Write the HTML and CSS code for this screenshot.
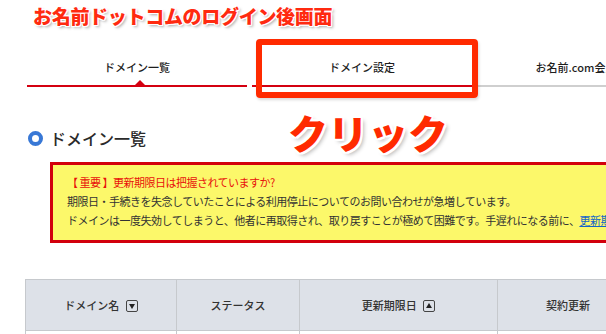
FILE: index.html
```html
<!DOCTYPE html>
<html lang="ja">
<head>
<meta charset="utf-8">
<title>お名前ドットコムのログイン後画面</title>
<link rel="stylesheet" href="styles.css">
</head>
<body>
<h1 class="page-title">お名前ドットコムのログイン後画面</h1>
<nav class="tabs">
  <div class="tab tab-active">ドメイン一覧</div>
  <div class="tab tab-red">ドメイン設定</div>
  <div class="tab tab-gray">お名前.com会員情報</div>
</nav>
<h2 class="section-head"><span class="ring"></span>ドメイン一覧</h2>
<div class="notice">
  <p class="notice-title">【&nbsp;重要&nbsp;】更新期限日は把握されていますか?</p>
  <p>期限日・手続きを失念していたことによる利用停止についてのお問い合わせが急増しています。</p>
  <p>ドメインは一度失効してしまうと、他者に再取得され、取り戻すことが極めて困難です。手遅れになる前に、<a href="#" class="notice-link">更新期限日を確認</a></p>
</div>
<table class="domains">
  <thead>
    <tr>
      <th class="c1">ドメイン名 <span class="sort sort-down"></span></th>
      <th class="c2">ステータス</th>
      <th class="c3">更新期限日 <span class="sort sort-up"></span></th>
      <th class="c4">契約更新</th>
      <th class="c5">自動更新</th>
    </tr>
  </thead>
  <tbody>
    <tr><td></td><td></td><td></td><td></td><td></td></tr>
  </tbody>
</table>
<div class="highlight-box"></div>
<div class="click-label">クリック</div>
</body>
</html>
```
FILE: styles.css
```css
html, body {
  margin: 0;
  padding: 0;
}
body {
  width: 606px;
  height: 334px;
  overflow: hidden;
  position: relative;
  background: #fff;
  font-family: "Noto Sans CJK JP", "Noto Sans", sans-serif;
  color: #222;
}
.page-title {
  margin: 0;
  padding: 5px 0 0 33px;
  height: 35px;
  box-sizing: border-box;
  font-size: 19px;
  line-height: 22px;
  font-weight: 900;
  letter-spacing: -0.3px;
  color: #ff2a10;
  text-shadow:
    1px 0 0 #fff, -1px 0 0 #fff, 0 1px 0 #fff, 0 -1px 0 #fff,
    1px 1px 0 #fff, -1px -1px 0 #fff, 1px -1px 0 #fff, -1px 1px 0 #fff,
    2px 2px 3px rgba(0,0,0,0.35);
}
.tabs {
  display: flex;
  gap: 5px;
  margin: 5px 0 0 27px;
}
.tab {
  flex: none;
  width: 220px;
  height: 47px;
  box-sizing: border-box;
  padding-top: 9px;
  display: flex;
  align-items: center;
  justify-content: center;
  font-size: 11px;
  font-weight: 500;
  color: #1e1e1e;
  border-bottom: 2px solid #d40010;
  position: relative;
  white-space: nowrap;
}
.tab-gray {
  border-bottom-color: #cfcfcf;
}
.tab-active::after {
  content: "";
  position: absolute;
  left: 50%;
  bottom: 0;
  margin-left: -2px;
  border-left: 5px solid transparent;
  border-right: 5px solid transparent;
  border-bottom: 5px solid #d40010;
}
.section-head {
  margin: 41px 0 0 28px;
  display: flex;
  align-items: center;
  gap: 7px;
  font-size: 16px;
  line-height: 20px;
  font-weight: 500;
  color: #2a2a2a;
}
.ring {
  width: 15px;
  height: 15px;
  box-sizing: border-box;
  border: 4px solid #3878d6;
  border-radius: 50%;
}
.notice {
  margin: 14px 0 0 50px;
  width: 640px;
  box-sizing: border-box;
  border: 3px solid #d2000c;
  background: #fcf86a;
  padding: 8px 0 10px 14px;
  font-size: 11px;
  line-height: 19px;
  letter-spacing: -0.5px;
  color: #333;
  white-space: nowrap;
  text-spacing-trim: space-all;
}
.notice p {
  margin: 0;
}
.notice-title {
  color: #e8100a;
}
.notice-link {
  color: #1565c8;
  text-decoration: underline;
}
.domains {
  margin: 36px 0 0 25px;
  border-collapse: collapse;
  table-layout: fixed;
  width: 760px;
  font-size: 11px;
  color: #333;
}
.domains th, .domains td {
  border: 1px solid #c6c9cd;
}
.domains th {
  background: #dde1e8;
  height: 50px;
  font-weight: 500;
  text-align: center;
  padding: 0;
  white-space: nowrap;
}
.domains td {
  height: 40px;
}
.c1 { width: 150px; }
.c2 { width: 122px; }
.c3 { width: 197px; }
.c4 { width: 140px; }
.c5 { width: 151px; }
.sort {
  display: inline-block;
  vertical-align: middle;
  width: 12px;
  height: 12px;
  box-sizing: border-box;
  border: 1px solid #444;
  border-radius: 2px;
  margin-left: 4px;
  position: relative;
  top: -1px;
}
.sort::after {
  content: "";
  position: absolute;
  left: 2px;
  top: 3px;
  border-left: 3px solid transparent;
  border-right: 3px solid transparent;
}
.sort-down::after {
  border-top: 5px solid #222;
}
.sort-up::after {
  top: 2px;
  border-bottom: 5px solid #222;
}
.highlight-box {
  position: absolute;
  left: 256px;
  top: 39px;
  width: 222px;
  height: 59px;
  box-sizing: border-box;
  border: 6px solid #ff2a00;
  border-radius: 4px;
  box-shadow: 1px 2px 3px rgba(0,0,0,0.15);
}
.click-label {
  position: absolute;
  left: 288px;
  top: 112px;
  font-size: 40px;
  line-height: 40px;
  font-weight: 900;
  color: #ff2a00;
  text-shadow:
    2px 0 0 #fff, -2px 0 0 #fff, 0 2px 0 #fff, 0 -2px 0 #fff,
    2px 2px 0 #fff, -2px -2px 0 #fff, 2px -2px 0 #fff, -2px 2px 0 #fff,
    3px 3px 4px rgba(0,0,0,0.3);
}
```
